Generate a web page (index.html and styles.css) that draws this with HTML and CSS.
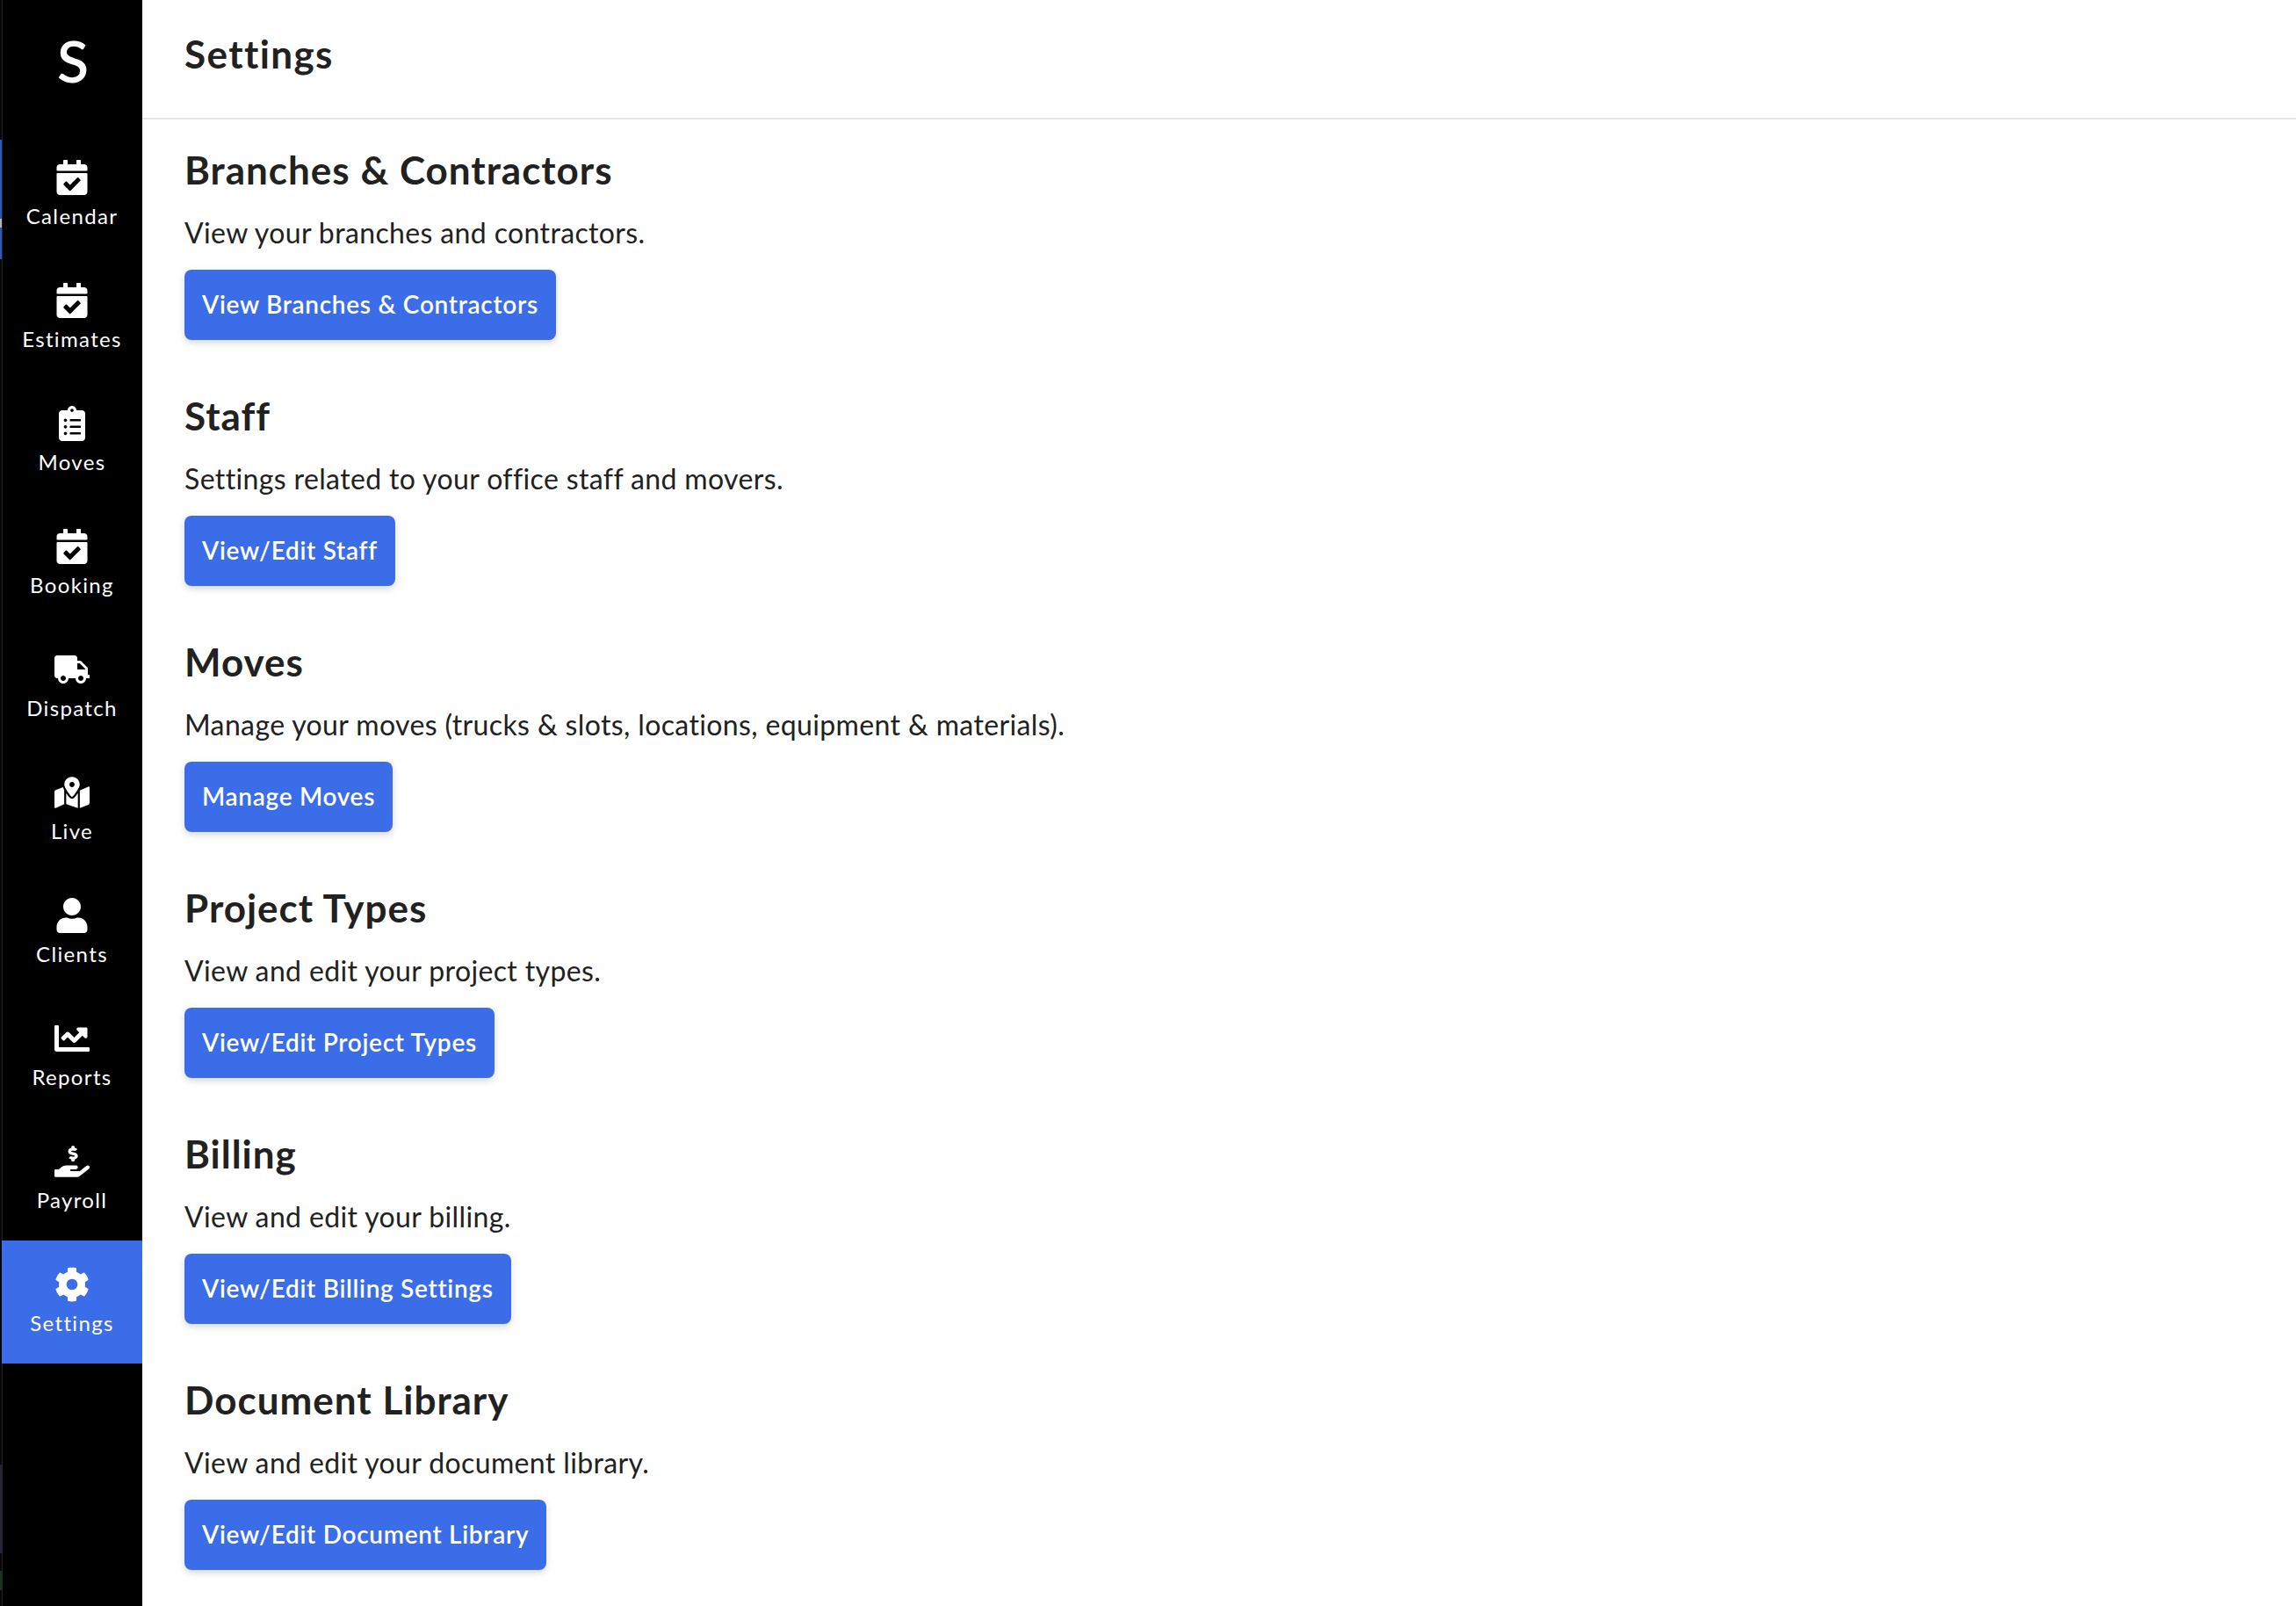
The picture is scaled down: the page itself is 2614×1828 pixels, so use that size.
FILE: index.html
```html
<!DOCTYPE html>
<html lang="en">
<head>
<meta charset="utf-8">
<title>Settings</title>
<link rel="stylesheet" href="styles.css">
</head>
<body>
<svg class="defs" aria-hidden="true">
  <symbol id="i-cal" viewBox="0 0 448 512"><path d="M436 160H12c-6.627 0-12-5.373-12-12v-36c0-26.51 21.49-48 48-48h48V12c0-6.627 5.373-12 12-12h40c6.627 0 12 5.373 12 12v52h128V12c0-6.627 5.373-12 12-12h40c6.627 0 12 5.373 12 12v52h48c26.51 0 48 21.49 48 48v36c0 6.627-5.373 12-12 12zM12 192h424c6.627 0 12 5.373 12 12v260c0 26.51-21.49 48-48 48H48c-26.51 0-48-21.49-48-48V204c0-6.627 5.373-12 12-12zm333.296 95.947l-28.169-28.398c-4.667-4.705-12.265-4.736-16.97-.068L194.12 364.665l-45.98-46.352c-4.667-4.705-12.266-4.736-16.971-.068l-28.397 28.17c-4.705 4.667-4.736 12.265-.068 16.97l82.601 83.269c4.667 4.705 12.265 4.736 16.97.068l142.953-141.805c4.705-4.667 4.736-12.265.068-16.97z"/></symbol>
  <symbol id="i-clip" viewBox="0 0 384 512"><path d="M336 64h-80c0-35.3-28.7-64-64-64s-64 28.7-64 64H48C21.5 64 0 85.5 0 112v352c0 26.5 21.5 48 48 48h288c26.5 0 48-21.5 48-48V112c0-26.5-21.5-48-48-48zM96 424c-13.3 0-24-10.7-24-24s10.7-24 24-24 24 10.7 24 24-10.7 24-24 24zm0-96c-13.3 0-24-10.7-24-24s10.7-24 24-24 24 10.7 24 24-10.7 24-24 24zm0-96c-13.3 0-24-10.7-24-24s10.7-24 24-24 24 10.7 24 24-10.7 24-24 24zm96-192c13.3 0 24 10.7 24 24s-10.7 24-24 24-24-10.7-24-24 10.7-24 24-24zm128 368c0 4.4-3.6 8-8 8H168c-4.4 0-8-3.6-8-8v-16c0-4.4 3.6-8 8-8h144c4.4 0 8 3.6 8 8v16zm0-96c0 4.4-3.6 8-8 8H168c-4.4 0-8-3.6-8-8v-16c0-4.4 3.6-8 8-8h144c4.4 0 8 3.6 8 8v16zm0-96c0 4.4-3.6 8-8 8H168c-4.4 0-8-3.6-8-8v-16c0-4.4 3.6-8 8-8h144c4.4 0 8 3.6 8 8v16z"/></symbol>
  <symbol id="i-truck" viewBox="0 0 640 512"><path d="M624 352h-16V243.9c0-12.7-5.1-24.9-14.1-33.9L494 110.1c-9-9-21.2-14.1-33.9-14.1H416V48c0-26.5-21.5-48-48-48H48C21.5 0 0 21.5 0 48v320c0 26.5 21.5 48 48 48h16c0 53 43 96 96 96s96-43 96-96h128c0 53 43 96 96 96s96-43 96-96h48c8.8 0 16-7.2 16-16v-32c0-8.8-7.2-16-16-16zM160 464c-26.5 0-48-21.5-48-48s21.5-48 48-48 48 21.5 48 48-21.5 48-48 48zm320 0c-26.5 0-48-21.5-48-48s21.5-48 48-48 48 21.5 48 48-21.5 48-48 48zm80-208H416V144h44.1l99.9 99.9V256z"/></symbol>
  <symbol id="i-map" viewBox="0 0 576 512"><path d="M288 0c-69.59 0-126 56.41-126 126 0 56.26 82.35 158.8 113.9 196.02 6.39 7.54 17.82 7.54 24.2 0C331.65 284.8 414 182.26 414 126 414 56.41 357.59 0 288 0zm0 168c-23.2 0-42-18.8-42-42s18.8-42 42-42 42 18.8 42 42-18.8 42-42 42zM20.12 215.95A32.006 32.006 0 0 0 0 245.66v250.32c0 11.32 11.43 19.06 21.94 14.86L160 448V214.92c-8.84-15.98-16.07-31.54-21.25-46.42L20.12 215.95zM288 359.67c-14.07 0-27.38-6.18-36.51-16.96-19.66-23.2-40.57-49.62-59.49-76.72V448l192 64V266c-18.92 27.09-39.82 53.52-59.49 76.72-9.13 10.77-22.44 16.95-36.51 16.95zm266.06-198.51L416 224v288l139.88-55.95A31.996 31.996 0 0 0 576 426.34V176.02c0-11.32-11.43-19.06-21.94-14.86z"/></symbol>
  <symbol id="i-user" viewBox="0 0 448 512"><path d="M224 256c70.7 0 128-57.3 128-128S294.7 0 224 0 96 57.3 96 128s57.3 128 128 128zm89.6 32h-16.7c-22.2 10.2-46.9 16-72.9 16s-50.6-5.8-72.9-16h-16.7C60.2 288 0 348.2 0 422.4V464c0 26.5 21.5 48 48 48h352c26.5 0 48-21.5 48-48v-41.6c0-74.2-60.2-134.4-134.4-134.4z"/></symbol>
  <symbol id="i-chart" viewBox="0 0 512 512"><path d="M496 384H64V80c0-8.84-7.16-16-16-16H16C7.16 64 0 71.16 0 80v336c0 17.67 14.33 32 32 32h464c8.84 0 16-7.16 16-16v-32c0-8.84-7.16-16-16-16zM464 96H345.94c-21.38 0-32.09 25.85-16.97 40.97l32.4 32.4L288 242.75l-73.37-73.37c-12.5-12.5-32.76-12.5-45.25 0l-68.69 68.69c-6.25 6.25-6.25 16.38 0 22.63l22.62 22.62c6.25 6.25 16.38 6.25 22.63 0L192 237.25l73.37 73.37c12.5 12.5 32.76 12.5 45.25 0l96-96 32.4 32.4c15.12 15.12 40.97 4.41 40.97-16.97V112c.01-8.84-7.15-16-16-16z"/></symbol>
  <symbol id="i-hand" viewBox="0 0 576 512"><path d="M271.06,144.3l54.27,14.3a8.59,8.59,0,0,1,6.63,8.1c0,4.6-4.09,8.4-9.12,8.4h-35.6a30,30,0,0,1-11.19-2.2c-5.24-2.2-11.28-1.7-15.3,2l-19,17.5a11.68,11.68,0,0,0-2.25,2.66,11.42,11.42,0,0,0,3.88,15.74,83.77,83.77,0,0,0,34.51,11.5V240c0,8.8,7.83,16,17.37,16h17.37c9.55,0,17.38-7.2,17.38-16V221.9c32.93-3.6,57.84-31,53.5-63-3.15-23-22.46-41.3-46.56-47.7L282.68,97.4a8.59,8.59,0,0,1-6.63-8.1c0-4.6,4.09-8.4,9.12-8.4h35.6A30,30,0,0,1,332,83.1c5.23,2.2,11.28,1.7,15.3-2l19-17.5A11.31,11.31,0,0,0,368.47,61a11.43,11.43,0,0,0-3.84-15.78,83.82,83.82,0,0,0-34.52-11.5V16c0-8.8-7.82-16-17.37-16H295.37C285.82,0,278,7.2,278,16V34.1c-32.83,3.6-57.84,31-53.5,63C227.63,120.1,247,138.4,271.06,144.3ZM565.27,328.1c-11.8-10.7-30.2-10-42.6,0L430.27,402a63.64,63.64,0,0,1-40,14H272a16,16,0,0,1,0-32h78.29c15.9,0,30.71-10.9,33.25-26.6a31.2,31.2,0,0,0,.46-5.46A32,32,0,0,0,352,320H192a117.66,117.66,0,0,0-74.1,26.29L71.4,384H16A16,16,0,0,0,0,400v96a16,16,0,0,0,16,16H372.77a64,64,0,0,0,40-14L564,377a32,32,0,0,0,1.28-48.9Z"/></symbol>
  <symbol id="i-cog" viewBox="0 0 512 512"><path d="M487.4 315.7l-42.6-24.6c4.3-23.2 4.3-47 0-70.2l42.6-24.6c4.9-2.8 7.1-8.6 5.5-14-11.1-35.6-30-67.8-54.7-94.6-3.8-4.1-10-5.1-14.8-2.3L380.8 110c-17.9-15.4-38.5-27.3-60.8-35.1V25.8c0-5.6-3.9-10.5-9.4-11.7-36.7-8.2-74.3-7.8-109.2 0-5.5 1.2-9.4 6.1-9.4 11.7V75c-22.2 7.9-42.8 19.8-60.8 35.1L88.7 85.5c-4.9-2.8-11-1.9-14.8 2.3-24.7 26.7-43.6 58.9-54.7 94.6-1.7 5.4.6 11.2 5.5 14L67.3 221c-4.3 23.2-4.3 47 0 70.2l-42.6 24.6c-4.9 2.8-7.1 8.6-5.5 14 11.1 35.6 30 67.8 54.7 94.6 3.8 4.1 10 5.1 14.8 2.3l42.6-24.6c17.9 15.4 38.5 27.3 60.8 35.1v49.2c0 5.6 3.9 10.5 9.4 11.7 36.7 8.2 74.3 7.8 109.2 0 5.5-1.2 9.4-6.1 9.4-11.7v-49.2c22.2-7.9 42.8-19.8 60.8-35.1l42.6 24.6c4.9 2.8 11 1.9 14.8-2.3 24.7-26.7 43.6-58.9 54.7-94.6 1.5-5.5-.7-11.3-5.6-14.1zM256 336c-44.1 0-80-35.9-80-80s35.9-80 80-80 80 35.9 80 80-35.9 80-80 80z"/></symbol>
</svg>
<div class="app">
  <div class="edge">
    <div class="edge-seg edge-gap-top"></div>
    <div class="edge-seg edge-blue-a"></div>
    <div class="edge-seg edge-light"></div>
    <div class="edge-seg edge-blue-b"></div>
    <div class="edge-seg edge-gap-mid"></div>
    <div class="edge-seg edge-navy"></div>
    <div class="edge-seg edge-gap-low"></div>
    <div class="edge-seg edge-green"></div>
  </div>
  <nav class="sidebar">
    <div class="logo">S</div>
    <a class="nav-item"><svg class="nav-icon"><use href="#i-cal"/></svg><span class="nav-label">Calendar</span></a>
    <a class="nav-item"><svg class="nav-icon"><use href="#i-cal"/></svg><span class="nav-label">Estimates</span></a>
    <a class="nav-item"><svg class="nav-icon"><use href="#i-clip"/></svg><span class="nav-label">Moves</span></a>
    <a class="nav-item"><svg class="nav-icon"><use href="#i-cal"/></svg><span class="nav-label">Booking</span></a>
    <a class="nav-item"><svg class="nav-icon"><use href="#i-truck"/></svg><span class="nav-label">Dispatch</span></a>
    <a class="nav-item"><svg class="nav-icon"><use href="#i-map"/></svg><span class="nav-label">Live</span></a>
    <a class="nav-item"><svg class="nav-icon"><use href="#i-user"/></svg><span class="nav-label">Clients</span></a>
    <a class="nav-item"><svg class="nav-icon"><use href="#i-chart"/></svg><span class="nav-label">Reports</span></a>
    <a class="nav-item"><svg class="nav-icon"><use href="#i-hand"/></svg><span class="nav-label">Payroll</span></a>
    <a class="nav-item is-active"><svg class="nav-icon"><use href="#i-cog"/></svg><span class="nav-label">Settings</span></a>
  </nav>
  <div class="main">
    <header class="topbar"><h1 class="page-title">Settings</h1></header>
    <div class="content">
      <section class="section">
        <h2 class="section-title">Branches &amp; Contractors</h2>
        <p class="section-text">View your branches and contractors.</p>
        <button class="btn">View Branches &amp; Contractors</button>
      </section>
      <section class="section">
        <h2 class="section-title">Staff</h2>
        <p class="section-text">Settings related to your office staff and movers.</p>
        <button class="btn">View/Edit Staff</button>
      </section>
      <section class="section">
        <h2 class="section-title">Moves</h2>
        <p class="section-text">Manage your moves (trucks &amp; slots, locations, equipment &amp; materials).</p>
        <button class="btn">Manage Moves</button>
      </section>
      <section class="section">
        <h2 class="section-title">Project Types</h2>
        <p class="section-text">View and edit your project types.</p>
        <button class="btn">View/Edit Project Types</button>
      </section>
      <section class="section">
        <h2 class="section-title">Billing</h2>
        <p class="section-text">View and edit your billing.</p>
        <button class="btn">View/Edit Billing Settings</button>
      </section>
      <section class="section">
        <h2 class="section-title">Document Library</h2>
        <p class="section-text">View and edit your document library.</p>
        <button class="btn">View/Edit Document Library</button>
      </section>
    </div>
  </div>
</div>
</body>
</html>
```
FILE: styles.css
```css
* { box-sizing: border-box; }
html, body { margin: 0; height: 100%; overflow: hidden; background: #fff; }
body { font-family: Lato, "Liberation Sans", sans-serif; color: #212121; }
.defs { display: none; }
.app { display: flex; height: 1828px; }
.edge { width: 2px; flex: none; background: #060606; display: flex; flex-direction: column; }
.edge-gap-top { height: 159px; }
.edge-blue-a { height: 90px; background: #2f56b8; }
.edge-light { height: 10px; background: #b8b4ac; }
.edge-blue-b { height: 36px; background: #2f56b8; }
.edge-gap-mid { height: 1372px; }
.edge-navy { height: 101px; background: #23233a; }
.edge-gap-low { height: 20px; }
.edge-green { height: 22px; background: #17361a; }
.sidebar { width: 160px; flex: none; background: linear-gradient(90deg, #242424 1px, #000 1px); display: flex; flex-direction: column; }
.logo { height: 152px; padding-top: 36px; padding-left: 2px; text-align: center; color: #fff; font-size: 66px; line-height: 65px; font-weight: 600; }
.nav-item { height: 140px; padding-top: 30px; display: flex; flex-direction: column; align-items: center; color: #fff; }
.nav-item.is-active { background: #3c6de8; }
.nav-icon { width: 40px; height: 40px; fill: #fff; display: block; }
.nav-label { margin-top: 9px; font-size: 24px; line-height: 30px; letter-spacing: 1.35px; white-space: nowrap; }
.main { flex: 1; min-width: 0; }
.topbar { height: 136px; border-bottom: 2px solid #e5e5e5; padding: 35px 0 0 48px; }
.page-title { margin: 0; font-size: 44px; line-height: 52px; font-weight: 700; letter-spacing: 1.4px; }
.content { padding: 35px 0 0 48px; }
.section { height: 280px; }
.section-title { margin: 0; font-size: 44px; line-height: 44px; font-weight: 700; letter-spacing: 1px; }
.section-text { margin: 0; padding-top: 27px; font-size: 32px; line-height: 46px; letter-spacing: .37px; }
.btn { display: block; margin-top: 19px; height: 80px; padding: 0 20px 2px; border: 0; border-radius: 8px; background: #3c6de8; color: #fff; font-family: inherit; font-size: 28px; font-weight: 600; letter-spacing: .7px; box-shadow: 0 3px 8px rgba(0,0,0,.16); white-space: nowrap; }
```
